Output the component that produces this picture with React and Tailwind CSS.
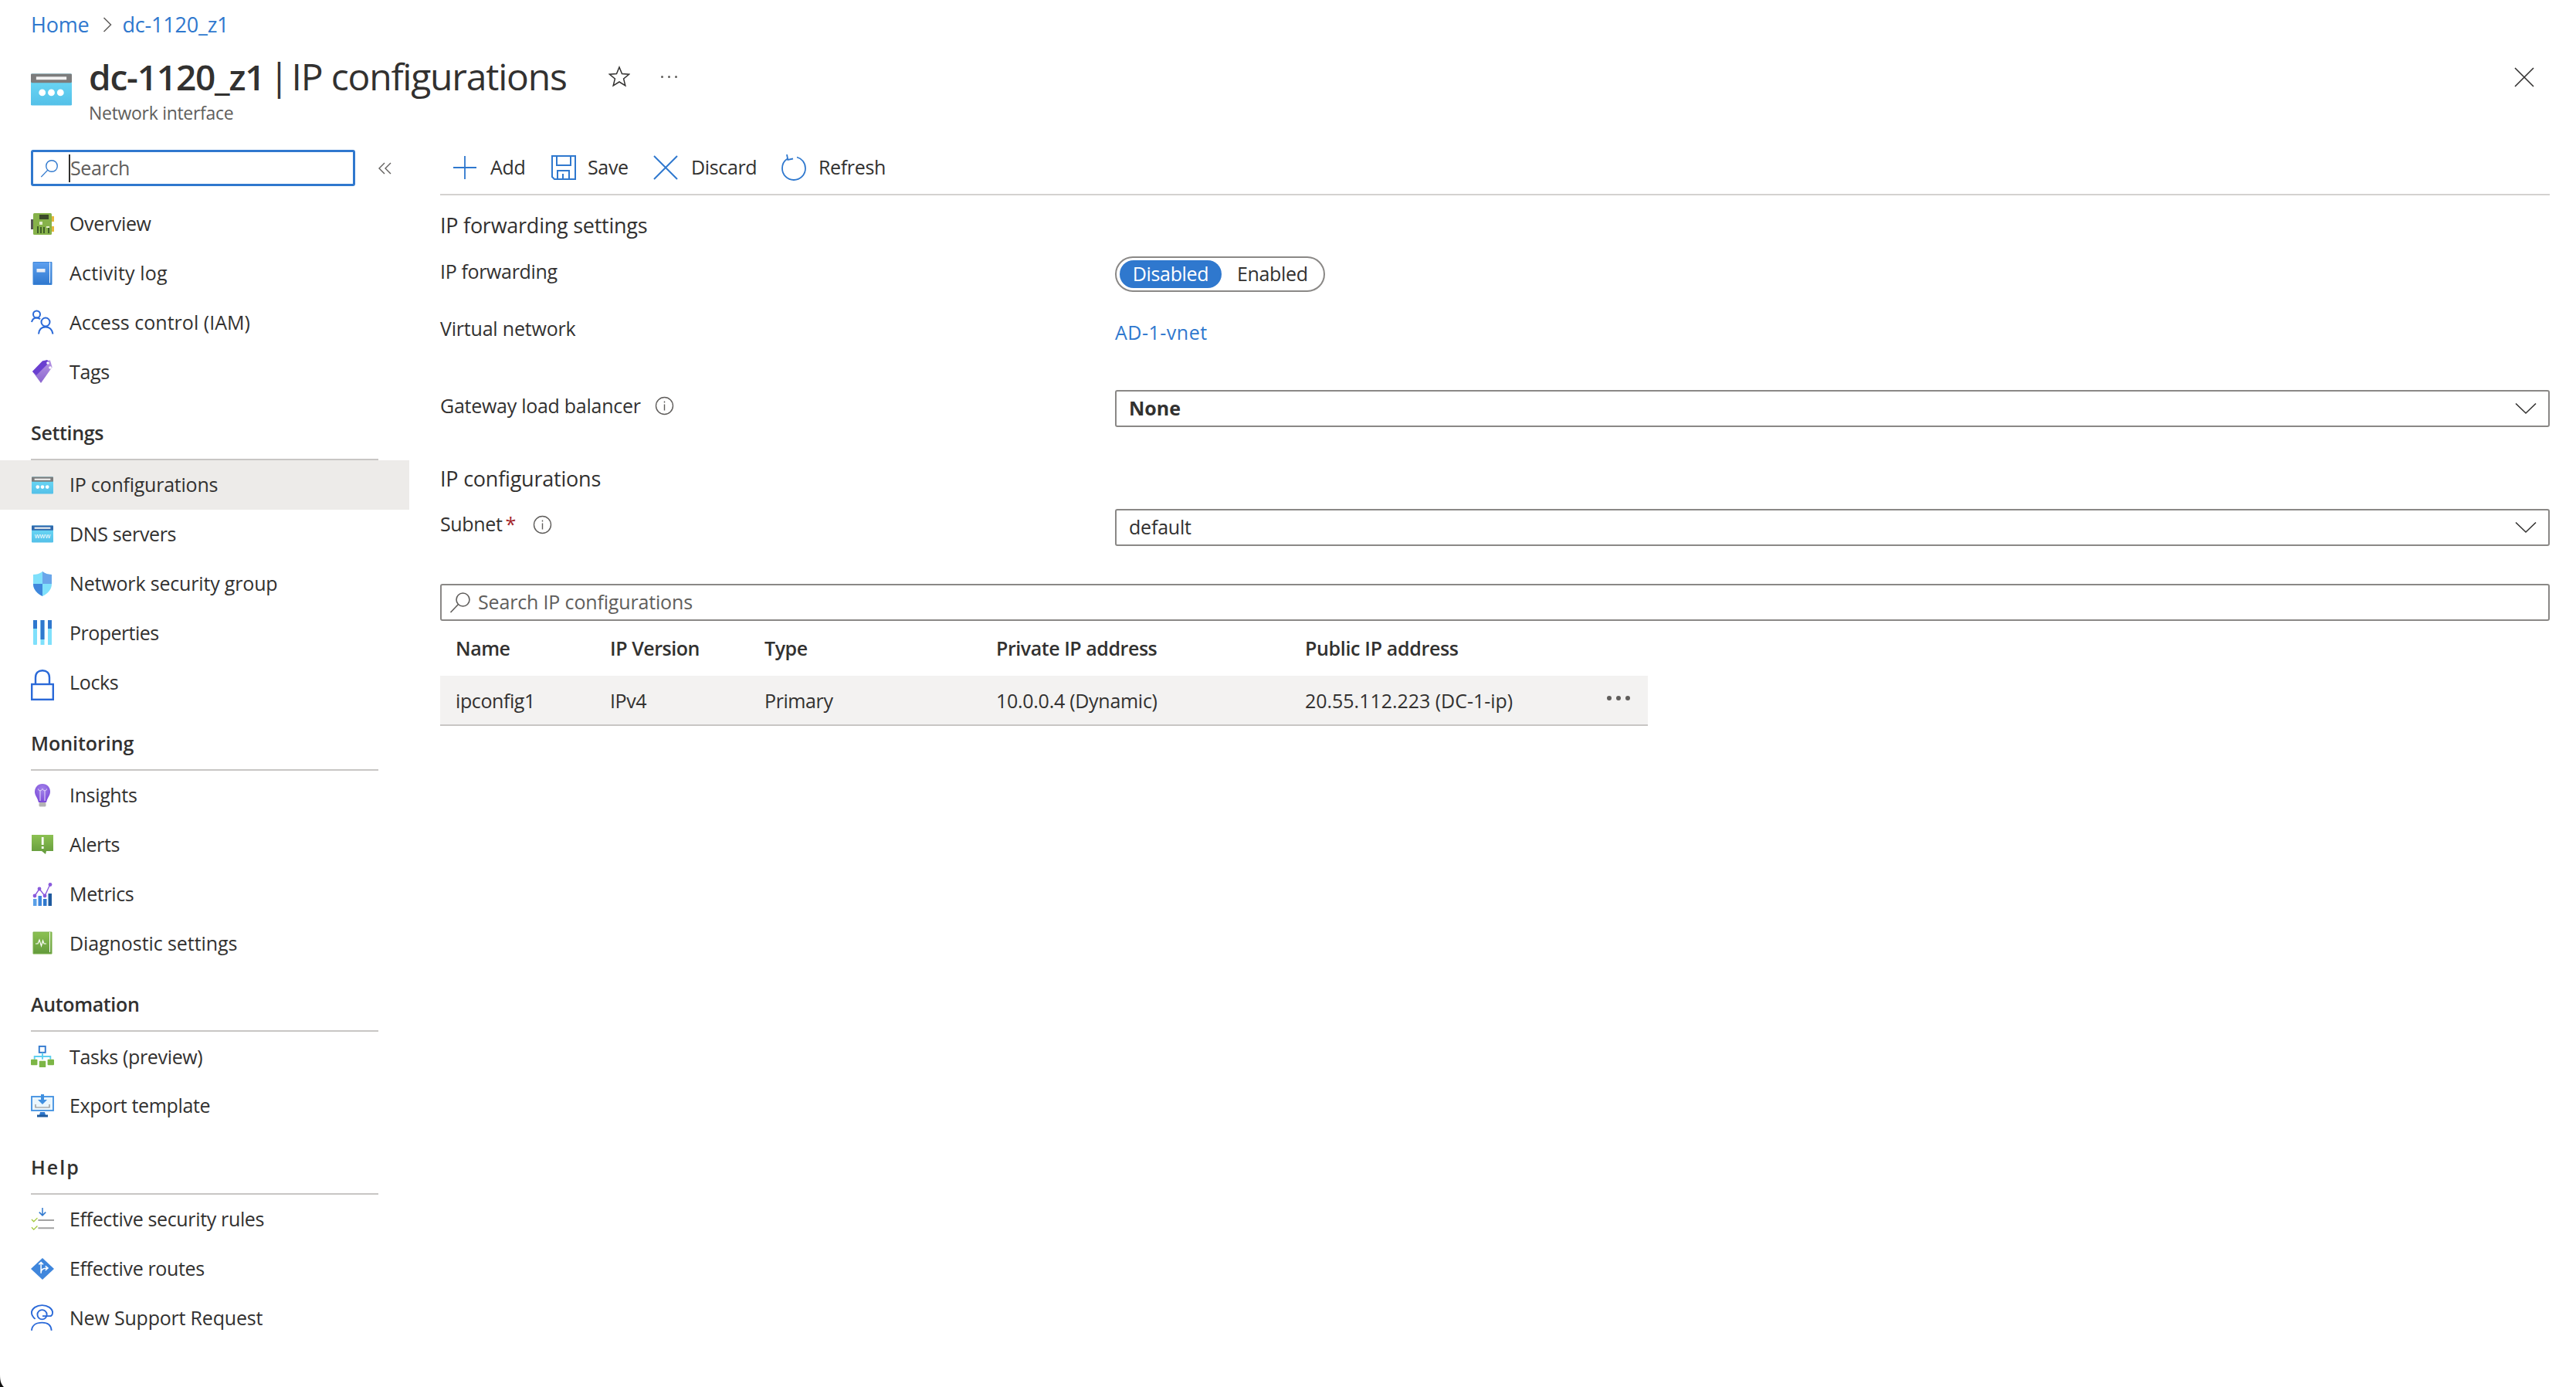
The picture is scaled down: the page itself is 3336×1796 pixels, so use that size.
import React from "react";

const F = "[font-family:'Open_Sans','Noto_Sans',sans-serif]";

function Search({ color = "#605e5c", size = 28 }) {
  return (
    <svg width={size} height={size} viewBox="0 0 28 28" fill="none" stroke={color} strokeWidth="1.6" className="shrink-0">
      <circle cx="17.5" cy="10.5" r="8.5" />
      <path d="M11.5 16.5 1.5 27" />
    </svg>
  );
}
function Chevron() {
  return (
    <svg width="28" height="16" viewBox="0 0 28 16" fill="none" stroke="#323130" strokeWidth="1.6">
      <path d="M1 1.5 14 14 27 1.5" />
    </svg>
  );
}
function Info() {
  return (
    <svg width="25" height="25" viewBox="0 0 25 25" fill="none" stroke="#605e5c" strokeWidth="1.4" className="shrink-0">
      <circle cx="12.5" cy="12.5" r="11" />
      <path d="M12.5 10.5v8M12.5 6.5v2" />
    </svg>
  );
}
function NetIcon({ w = 28, h = 23, dark = false, www = false }) {
  return (
    <svg width={w} height={h} viewBox="0 0 54 42">
      <defs>
        <linearGradient id={www ? "nb2" : "nb1"} x1="0" y1="0" x2="0" y2="1">
          <stop offset="0" stopColor="#6fdcf8" />
          <stop offset="1" stopColor="#54c0e8" />
        </linearGradient>
      </defs>
      <rect x="0" y="0" width="54" height="42" rx="1.5" fill={`url(#${www ? "nb2" : "nb1"})`} />
      <rect x="0" y="0" width="54" height="12" rx="1.5" fill={dark ? "#2f69ad" : "#7c7c7c"} />
      <rect x="7" y="4" width="40" height="4" fill="#f2f2f2" />
      {www ? (
        <text x="27" y="31" textAnchor="middle" fontSize="17" fill="#fff" fontFamily="Open Sans, sans-serif">www</text>
      ) : (
        <>
          <circle cx="15" cy="25" r="4.5" fill="#fff" />
          <circle cx="27" cy="25" r="4.5" fill="#fff" />
          <circle cx="39" cy="25" r="4.5" fill="#fff" />
        </>
      )}
    </svg>
  );
}
const I = {
  overview: (
    <svg width="30" height="28" viewBox="0 0 30 28">
      <rect x="3" y="0" width="24" height="28" rx="1.5" fill="#86b24a" />
      <rect x="0" y="8" width="3" height="13" fill="#555" />
      <rect x="27" y="4" width="3" height="7" fill="#e7b73c" />
      <rect x="27" y="17" width="3" height="7" fill="#e7b73c" />
      <rect x="11" y="2" width="12" height="6" fill="#3b4a2a" />
      <rect x="11" y="11" width="4" height="4" fill="#e4efcf" />
      <path d="M9 26v-9M13 26v-8M17 26v-8M23 26v-7" stroke="#2f4a20" strokeWidth="1.6" />
      <rect x="20" y="17" width="4" height="2" fill="#e4efcf" />
    </svg>
  ),
  activity: (
    <svg width="26" height="32" viewBox="0 0 26 32">
      <defs>
        <linearGradient id="act" x1="0" y1="0" x2="0" y2="1">
          <stop offset="0" stopColor="#5ea0ef" />
          <stop offset="1" stopColor="#2f78ce" />
        </linearGradient>
      </defs>
      <path d="M1 1.5h24v29H1z" fill="url(#act)" stroke="#3f87d8" />
      <path d="M22.5 1.5v27" stroke="#fff" strokeWidth="1" />
      <rect x="5.5" y="10" width="11" height="4.5" fill="#e9eef5" />
    </svg>
  ),
  access: (
    <svg width="30" height="32" viewBox="0 0 30 32" fill="none" stroke="#2a69d8" strokeWidth="2">
      <circle cx="7.5" cy="6" r="4.5" />
      <path d="M1 16c1-4 3.500-5.500 6.500-5.500 2 0 3.200.5 4.500 1.800" />
      <circle cx="19" cy="16" r="5.500" />
      <path d="M10 31.500c.5-6 4-9 9-9s8.500 3 9.500 9" />
    </svg>
  ),
  tags: (
    <svg width="28" height="32" viewBox="0 0 28 32">
      <defs>
        <linearGradient id="tg" x1="0" y1="0" x2="0" y2="1">
          <stop offset="0" stopColor="#b796e4" />
          <stop offset="1" stopColor="#8a65cf" />
        </linearGradient>
      </defs>
      <path d="M1 16 14 2.500l10-1 2.500 9L12 31z" fill="url(#tg)" />
      <path d="M1 16 14 2.500l6-1.500 3 3L6 21z" fill="#6a3fd0" />
      <circle cx="21" cy="5" r="1.800" fill="#fff" />
      <circle cx="24" cy="11" r="1.800" fill="#fff" />
    </svg>
  ),
  nsg: (
    <svg width="26" height="32" viewBox="0 0 26 32">
      <path d="M13 0C9 3 5 4 1 4v12c0 8 6 13 12 16 6-3 12-8 12-16V4c-4 0-8-1-12-4z" fill="#7fe0fb" />
      <path d="M13 0v16h12V4c-4 0-8-1-12-4z" fill="#6aa6ea" />
      <path d="M1 16c0 8 6 13 12 16V16z" fill="#3f86dc" />
    </svg>
  ),
  props: (
    <svg width="26" height="32" viewBox="0 0 26 32">
      <rect x="1" y="0" width="5" height="32" rx="1" fill="#7fe0fb" />
      <rect x="1" y="0" width="5" height="11" fill="#2f78ce" />
      <rect x="10.500" y="0" width="5" height="32" fill="#7fe0fb" />
      <rect x="10.500" y="0" width="5" height="25" fill="#2f78ce" />
      <rect x="20" y="0" width="5" height="32" fill="#7fe0fb" />
      <rect x="20" y="0" width="5" height="11" fill="#2f78ce" />
    </svg>
  ),
  lock: (
    <svg width="30" height="40" viewBox="0 0 30 40" fill="none" stroke="#2a69d8" strokeWidth="2.4" className="translate-y-[4px]">
      <rect x="1.200" y="19" width="27.600" height="19.800" />
      <path d="M6 19V10.500C6 4.500 9.500 1.200 15 1.200s9 3.300 9 9.300V19" />
    </svg>
  ),
  insights: (
    <svg width="22" height="30" viewBox="0 0 22 30">
      <defs>
        <radialGradient id="bulb" cx="0.5" cy="0.3" r="0.7">
          <stop offset="0" stopColor="#a283ea" />
          <stop offset="1" stopColor="#7b49d8" />
        </radialGradient>
      </defs>
      <path d="M11 0C5 0 1 4.500 1 10c0 5 3.500 7.500 5 14h10c1.500-6.500 5-9 5-14C21 4.500 17 0 11 0z" fill="url(#bulb)" />
      <path d="M8 22V9M14 22V9M5.500 6.500c0 3 5 3 5 0M11.500 6.500c0 3 5 3 5 0" stroke="#e8defa" strokeWidth="1" fill="none" />
      <rect x="6.500" y="24" width="9" height="5.500" rx="1.500" fill="#b3b3b3" />
    </svg>
  ),
  alerts: (
    <svg width="28" height="26" viewBox="0 0 28 26">
      <defs>
        <linearGradient id="al" x1="0" y1="0" x2="0" y2="1">
          <stop offset="0" stopColor="#8cc152" />
          <stop offset="1" stopColor="#639a3c" />
        </linearGradient>
      </defs>
      <path d="M0 0h28v21H19l-1 4-5-4H0z" fill="url(#al)" />
      <rect x="12.800" y="3" width="2.800" height="10" fill="#fff" />
      <rect x="12.800" y="15" width="2.800" height="3" fill="#fff" />
    </svg>
  ),
  metrics: (
    <svg width="26" height="30" viewBox="0 0 26 30">
      <rect x="1" y="21" width="4.500" height="9" fill="#5aa0e8" />
      <rect x="7.500" y="17" width="4.500" height="13" fill="#3f86dc" />
      <rect x="14" y="21" width="4.500" height="9" fill="#2f78ce" />
      <rect x="20.500" y="14" width="4.500" height="16" fill="#1f5a9e" />
      <path d="M3 17 9 8l7 9 7-15" stroke="#8a5bdc" strokeWidth="1.400" fill="none" />
      <circle cx="3" cy="17" r="2.400" fill="#8a5bdc" />
      <circle cx="9" cy="8" r="2.400" fill="#8a5bdc" />
      <circle cx="16" cy="17" r="2.400" fill="#8a5bdc" />
      <circle cx="23" cy="2.500" r="2.400" fill="#8a5bdc" />
    </svg>
  ),
  diag: (
    <svg width="26" height="30" viewBox="0 0 26 30">
      <defs>
        <linearGradient id="dg" x1="0" y1="0" x2="0" y2="1">
          <stop offset="0" stopColor="#8cc152" />
          <stop offset="1" stopColor="#639a3c" />
        </linearGradient>
      </defs>
      <path d="M1 1h24v28H1z" fill="url(#dg)" stroke="#7bb04a" />
      <path d="M22.500 1v26" stroke="#fff" strokeWidth="1" />
      <path d="M4 16h3l2-5 2.500 8 2-7 1.500 4h3" stroke="#fff" strokeWidth="1.200" fill="none" />
    </svg>
  ),
  tasks: (
    <svg width="32" height="30" viewBox="0 0 32 30">
      <rect x="11.500" y="1" width="8.500" height="8.500" fill="#fff" stroke="#2f78ce" strokeWidth="2" />
      <path d="M16 10v9M5 19v-4h22v4" stroke="#5fd0f0" strokeWidth="2" fill="none" />
      <rect x="0" y="19" width="9" height="8" rx="1" fill="#7db646" />
      <rect x="11.500" y="21" width="9" height="9" rx="1" fill="#7db646" />
      <rect x="23" y="19" width="9" height="8" rx="1" fill="#7db646" />
    </svg>
  ),
  exportT: (
    <svg width="30" height="30" viewBox="0 0 30 30">
      <rect x="1" y="3" width="28" height="18" fill="#eaf6fd" stroke="#3f8fe0" strokeWidth="1.800" />
      <path d="M12 23h6l1 4H11z" fill="#2f78ce" />
      <rect x="8" y="26.500" width="14" height="3" fill="#1f5a9e" />
      <path d="M13 0h4v7h4l-6 6-6-6h4z" fill="#3f8fe0" />
      <path d="M6 13v4h18v-4" stroke="#8a8a8a" strokeWidth="1.200" fill="none" />
    </svg>
  ),
  rules: (
    <svg width="32" height="32" viewBox="0 0 32 32" fill="none">
      <path d="M16 0v10M11.500 6 16 10.500 20.500 6" stroke="#2f78ce" strokeWidth="1.600" />
      <path d="M10 17h22M10 28h22" stroke="#a3a3a3" strokeWidth="2.200" />
      <path d="M1 16l3 3 5-5M1 27l3 3 5-5" stroke="#a4c93c" strokeWidth="1.400" />
    </svg>
  ),
  routes: (
    <svg width="32" height="30" viewBox="0 0 32 30">
      <path d="M16 0 32 15 16 30 0 15z" fill="#3f86dc" />
      <path d="M14 7v14M14 20c0-5 4-6 9-6M20 11l3.500 3-3.500 3M11 9l3-3 3 3" stroke="#fff" strokeWidth="1.600" fill="none" />
    </svg>
  ),
  support: (
    <svg width="32" height="36" viewBox="0 0 32 36" fill="none" stroke="#2a69d8" strokeWidth="2">
      <path d="M6 20C2.500 17 1 14.500 1 11.500 1 5.500 8 1 15.500 1S30 5.500 30 11.500c0 2-1 3.500-2.500 4.500H16" />
      <circle cx="15.500" cy="14" r="6.500" />
      <path d="M1 36c.5-7 6-11 14.500-11S28 29 28.500 36" />
    </svg>
  ),
};

function Row({ icon, label, active, t = "tracking-[-0.35px]" }) {
  return (
    <div className={`flex h-[63.8px] items-center pl-[40px] ${active ? "bg-[#edebe9]" : ""}`}>
      <span className="flex w-[30px] shrink-0 items-center justify-center">{icon}</span>
      <span className={`ml-[20px] whitespace-nowrap text-[25px] text-[#323130] ${t}`}>{label}</span>
    </div>
  );
}
function Head({ label, t = "tracking-[-0.35px]" }) {
  return (
    <div className={`ml-[40px] flex h-[83px] w-[450px] items-center border-b-2 border-[#c8c6c4] pt-[14px] text-[25px] font-semibold text-[#323130] ${t}`}>
      {label}
    </div>
  );
}
function Field({ label, h, children }) {
  return (
    <div className={`flex ${h}`}>
      <div className="flex w-[874px] shrink-0 items-start gap-[4px]">{label}</div>
      <div className="min-w-0 flex-1">{children}</div>
    </div>
  );
}
function Select({ bold, children }) {
  return (
    <div className="flex h-[48px] items-center justify-between rounded-[3px] border-2 border-[#8a8886] pl-[16px] pr-[15px]">
      <span className={`text-[25px] text-[#323130] ${bold ? "font-bold tracking-[0px]" : "tracking-[-0.2px]"}`}>{children}</span>
      <Chevron />
    </div>
  );
}
function Tool({ icon, label, w }) {
  return (
    <div className={`flex items-center ${w}`}>
      {icon}
      <span className="text-[25px] tracking-[-0.35px] text-[#323130]">{label}</span>
    </div>
  );
}

export default function App() {
  return (
    <div className={`relative h-[1796px] w-[3336px] overflow-hidden bg-white ${F}`}>
      <header className="h-[184px] pl-[40px] pr-[54px]">
        <div className="flex h-[64px] items-center text-[27px] tracking-[-0.2px] text-[#2f78ce]">
          <span>Home</span>
          <svg width="12" height="20" viewBox="0 0 12 20" fill="none" stroke="#605e5c" strokeWidth="1.500" className="ml-[17px] mr-[14px]">
            <path d="M1.500 1 10.500 10 1.500 19" />
          </svg>
          <span>dc-1120_z1</span>
        </div>
        <div className="flex items-start">
          <div className="pt-[31px]">
            <NetIcon w={53} h={42} />
          </div>
          <div className="ml-[22px]">
            <div className="flex h-[67px] items-center pt-[3px]">
              <span className="flex items-baseline whitespace-nowrap text-[#323130]">
                <span className="text-[46px] font-semibold tracking-[-1.2px]">dc-1120_z1</span>
                <span className="ml-[6px] text-[48px] tracking-[-1.2px]">|</span>
                <span className="ml-[4px] text-[48px] tracking-[-1.2px]">IP configurations</span>
              </span>
              <svg width="28" height="28" viewBox="0 0 28 28" fill="none" stroke="#323130" strokeWidth="1.500" className="ml-[54px]">
                <path d="M14 2l3.500 8.500 9 .7-6.900 5.800 2.200 8.800L14 21l-7.800 4.800 2.200-8.800L1.500 11.200l9-.7z" />
              </svg>
              <span className="ml-[40px] flex gap-[6px]">
                <span className="h-[3px] w-[3px] rounded-full bg-[#605e5c]" />
                <span className="h-[3px] w-[3px] rounded-full bg-[#605e5c]" />
                <span className="h-[3px] w-[3px] rounded-full bg-[#605e5c]" />
              </span>
            </div>
            <div className="text-[23px] leading-[30px] tracking-[-0.3px] text-[#605e5c]">Network interface</div>
          </div>
          <svg width="26" height="26" viewBox="0 0 26 26" fill="none" stroke="#323130" strokeWidth="1.600" className="ml-auto mt-[23px]">
            <path d="M1 1l24 24M25 1 1 25" />
          </svg>
        </div>
      </header>

      <div className="flex">
        <aside className="w-[530px] shrink-0">
          <div className="flex items-center pt-[10px]">
            <div className="ml-[40px] flex h-[47px] w-[420px] items-center rounded-[3px] border-[3px] border-[#2f78ce] pl-[9px]">
              <Search color="#2f78ce" size={24} />
              <span className="ml-[13px] h-[36px] w-[2px] bg-[#323130]" />
              <span className="text-[25px] tracking-[-0.35px] text-[#605e5c]">Search</span>
            </div>
            <svg width="18" height="16" viewBox="0 0 18 16" fill="none" stroke="#605e5c" strokeWidth="1.400" className="ml-[30px]">
              <path d="M8 1 1 8l7 7M16 1 9 8l7 7" />
            </svg>
          </div>
          <div className="pt-[17px]">
            <Row icon={I.overview} label="Overview" />
            <Row icon={I.activity} label="Activity log" t="tracking-[0.18px]" />
            <Row icon={I.access} label="Access control (IAM)" t="tracking-[0.02px]" />
            <Row icon={I.tags} label="Tags" />
            <Head label="Settings" />
            <Row icon={<NetIcon />} label="IP configurations" active t="tracking-[-0.23px]" />
            <Row icon={<NetIcon dark www />} label="DNS servers" />
            <Row icon={I.nsg} label="Network security group" t="tracking-[-0.17px]" />
            <Row icon={I.props} label="Properties" t="tracking-[-0.55px]" />
            <Row icon={I.lock} label="Locks" />
            <Head label="Monitoring" t="tracking-[-0.05px]" />
            <Row icon={I.insights} label="Insights" />
            <Row icon={I.alerts} label="Alerts" />
            <Row icon={I.metrics} label="Metrics" />
            <Row icon={I.diag} label="Diagnostic settings" t="tracking-[-0.08px]" />
            <Head label="Automation" />
            <Row icon={I.tasks} label="Tasks (preview)" />
            <Row icon={I.exportT} label="Export template" />
            <Head label="Help" t="tracking-[2px]" />
            <Row icon={I.rules} label="Effective security rules" />
            <Row icon={I.routes} label="Effective routes" />
            <Row icon={I.support} label="New Support Request" t="tracking-[-0.2px]" />
          </div>
        </aside>

        <main className="min-w-0 flex-1 pl-[40px] pr-[34px]">
          <div className="flex h-[69px] items-center border-b-2 border-[#d4d2d0] pb-[1px] pl-[17px]">
            <Tool
              w="w-[127px]"
              label="Add"
              icon={
                <svg width="30" height="30" viewBox="0 0 30 30" fill="none" stroke="#2f78ce" strokeWidth="1.800" className="mr-[18px]">
                  <path d="M15 0v30M0 15h30" />
                </svg>
              }
            />
            <Tool
              w="w-[132px]"
              label="Save"
              icon={
                <svg width="32" height="32" viewBox="0 0 32 32" fill="none" stroke="#2f78ce" strokeWidth="2" className="mr-[15px]">
                  <path d="M1 1h30v30H4l-3-3z" />
                  <path d="M7 1v12h18V1M8 31V20h15v11M15 24v7" />
                </svg>
              }
            />
            <Tool
              w="w-[166px]"
              label="Discard"
              icon={
                <svg width="32" height="32" viewBox="0 0 32 32" fill="none" stroke="#2f78ce" strokeWidth="2" className="mr-[17px]">
                  <path d="M1 1l30 30M31 1 1 31" />
                </svg>
              }
            />
            <Tool
              label="Refresh"
              icon={
                <svg width="32" height="34" viewBox="0 0 32 34" fill="none" stroke="#2f78ce" strokeWidth="1.800" className="mr-[16px]">
                  <path d="M8 5.500C3.500 8 1 12.500 1 18c0 8.500 6.700 15 15 15s15-6.500 15-15C31 10.500 26 5 20 3.500" />
                  <path d="M7 0l1.300 7L15 5.500" />
                </svg>
              }
            />
          </div>

          <div className="pt-[19px] text-[#323130]">
            <div className="h-[59px] text-[27px] leading-[40px] tracking-[-0.25px]">IP forwarding settings</div>
            <Field h="h-[75px]" label={<span className="pt-[2px] text-[25px] tracking-[-0.35px]">IP forwarding</span>}>
              <div className="mt-[1px] flex h-[46px] w-[272px] items-center rounded-full border-2 border-[#8a8886] pl-[4px] text-[25px] tracking-[-0.35px]">
                <span className="flex h-[36px] w-[132px] items-center justify-center rounded-full bg-[#2f78ce] text-white">Disabled</span>
                <span className="ml-[20px]">Enabled</span>
              </div>
            </Field>
            <Field h="h-[99px]" label={<span className="pt-[1px] text-[25px] tracking-[-0.2px]">Virtual network</span>}>
              <span className="block pt-[6px] text-[25px] leading-[36px] tracking-[0.5px] text-[#2f78ce]">AD-1-vnet</span>
            </Field>
            <Field
              h="h-[94px]"
              label={
                <>
                  <span className="pt-[2px] text-[25px] tracking-[-0.27px]">Gateway load balancer</span>
                  <span className="ml-[14px] pt-[8px]"><Info /></span>
                </>
              }
            >
              <Select bold>None</Select>
            </Field>
            <div className="h-[60px] text-[27px] leading-[42px] tracking-[-0.22px]">IP configurations</div>
            <Field
              h="h-[97px]"
              label={
                <>
                  <span className="pt-[1px] text-[25px] tracking-[-0.35px]">Subnet</span>
                  <span className="pt-[1px] text-[25px] text-[#a4262c]">*</span>
                  <span className="ml-[18px] pt-[8px]"><Info /></span>
                </>
              }
            >
              <Select>default</Select>
            </Field>
            <div className="flex h-[48px] items-center rounded-[3px] border-2 border-[#8a8886] pl-[10px]">
              <Search color="#605e5c" size={28} />
              <span className="ml-[9px] text-[25px] tracking-[-0.16px] text-[#605e5c]">Search IP configurations</span>
            </div>
            <div className="flex h-[71px] w-[1564px] items-center pl-[20px] pt-[1px] text-[25px] font-semibold tracking-[-0.45px]">
              <span className="w-[200px]">Name</span>
              <span className="w-[200px]">IP Version</span>
              <span className="w-[300px]">Type</span>
              <span className="w-[400px]">Private IP address</span>
              <span className="tracking-[-0.33px]">Public IP address</span>
            </div>
            <div className="flex h-[65px] w-[1564px] items-center border-b-2 border-[#c8c6c4] bg-[#f3f2f1] pl-[20px] pt-[2px] text-[25px] tracking-[-0.4px]">
              <span className="w-[200px]">ipconfig1</span>
              <span className="w-[200px]">IPv4</span>
              <span className="w-[300px]">Primary</span>
              <span className="w-[400px] tracking-[-0.28px]">10.0.0.4 (Dynamic)</span>
              <span className="w-[391px] tracking-[-0.03px]">20.55.112.223 (DC-1-ip)</span>
              <span className="mb-[8px] flex gap-[6px]">
                <span className="h-[6px] w-[6px] rounded-full bg-[#605e5c]" />
                <span className="h-[6px] w-[6px] rounded-full bg-[#605e5c]" />
                <span className="h-[6px] w-[6px] rounded-full bg-[#605e5c]" />
              </span>
            </div>
          </div>
        </main>
      </div>

      <svg width="5" height="16" viewBox="0 0 5 16" className="absolute bottom-0 left-0">
        <path d="M0 0C0 7 1 12 5 16H0z" fill="#111" />
      </svg>
    </div>
  );
}
